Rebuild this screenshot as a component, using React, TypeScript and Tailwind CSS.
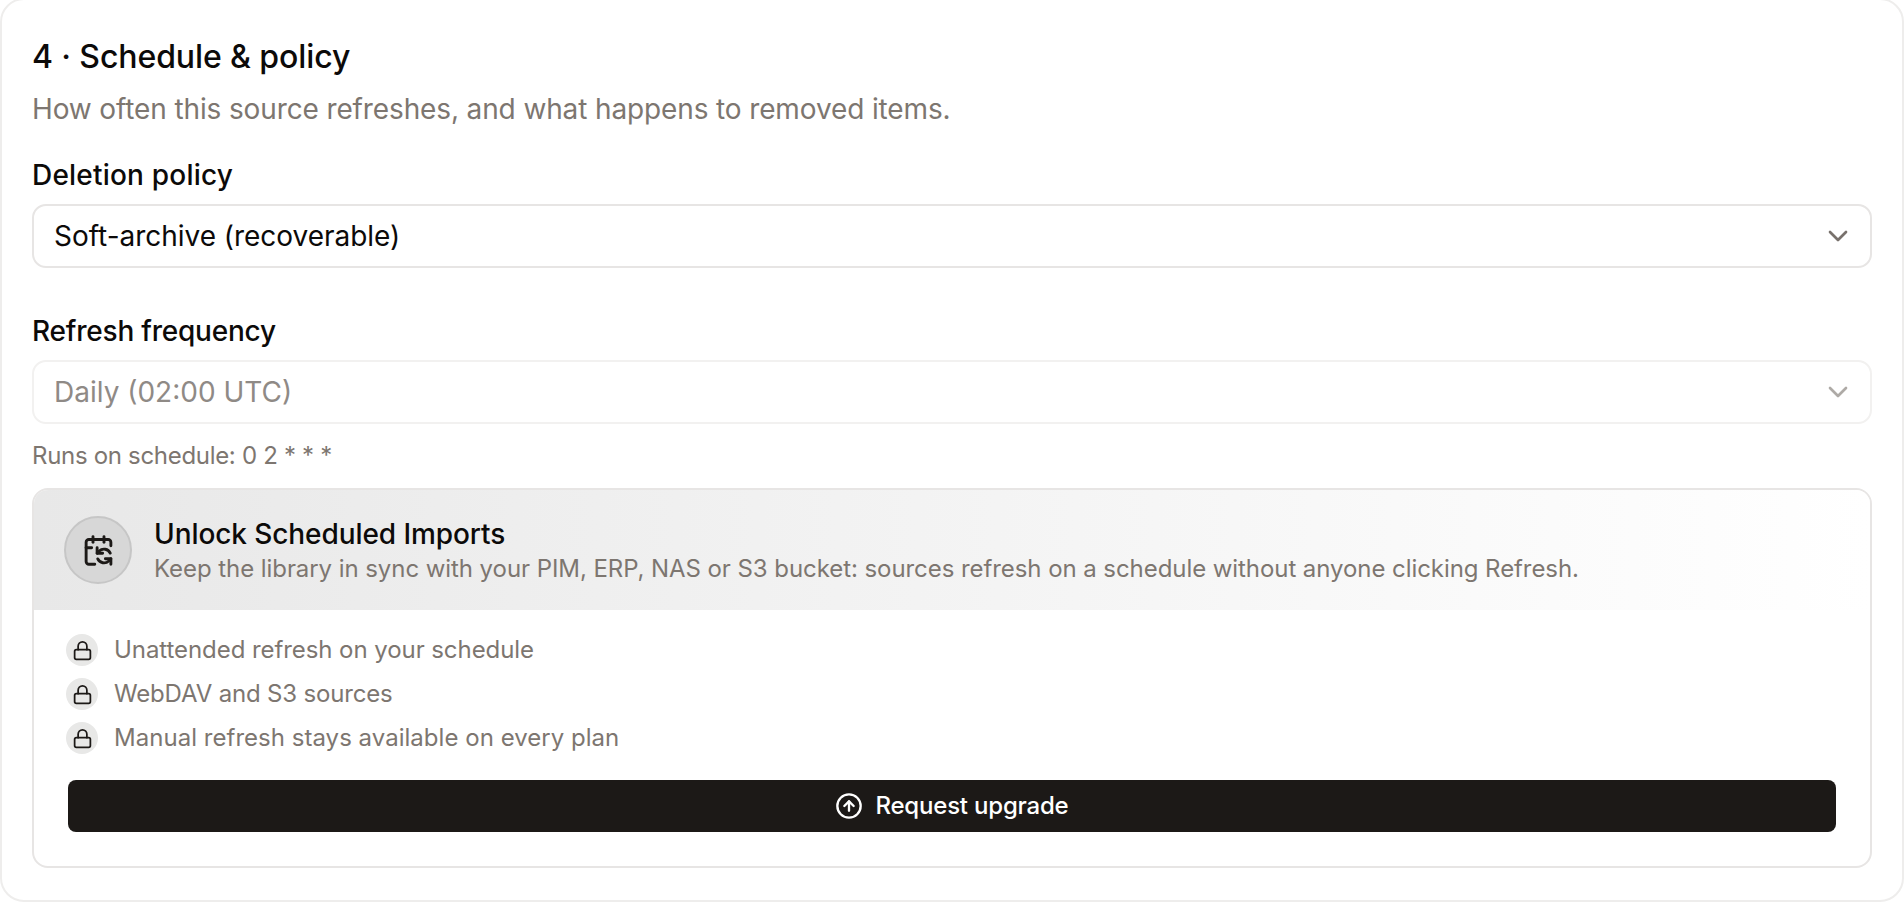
import { CalendarSync, ChevronDown, CircleArrowUp, Lock } from 'lucide-react';

const perks = [
  { text: 'Unattended refresh on your schedule', tracking: 'tracking-[-0.07px]' },
  { text: 'WebDAV and S3 sources', tracking: 'tracking-[-0.17px]' },
  { text: 'Manual refresh stays available on every plan', tracking: 'tracking-[0.03px]' },
];

function SelectBox({ value, tracking, disabled = false }: { value: string; tracking?: string; disabled?: boolean }) {
  return (
    <div
      className={`flex h-16 items-center justify-between rounded-[14px] border-2 pl-[20px] pr-4 ${
        disabled ? 'border-[#f2f1f0] text-[#8f8a86]' : 'border-[#e7e5e4] text-[#0c0a09]'
      }`}
    >
      <span className={`text-[28px] leading-none ${tracking ?? ''}`}>{value}</span>
      <ChevronDown className={`h-8 w-8 ${disabled ? 'text-[#aeaaa6]' : 'text-[#78716c]'}`} strokeWidth={2} />
    </div>
  );
}

export default function App() {
  return (
    <div className="h-[902px] w-full overflow-hidden bg-white font-['Inter',sans-serif]">
      <div className="-mt-[2px] h-[904px] rounded-[24px] border-2 border-[#eeedec] px-[30px] pt-[37px]">
        <h2 className="text-[32px] font-[450] leading-[40px] tracking-[-0.1px] text-[#0c0a09]">4 · Schedule &amp; policy</h2>
        <p className="mt-[12px] text-[28px] leading-[40px] tracking-[-0.127px] text-[#7d7670]">
          How often this source refreshes, and what happens to removed items.
        </p>

        <label className="mt-[26px] block text-[28px] font-[450] leading-[40px] tracking-[0.2px] text-[#0c0a09]">Deletion policy</label>
        <div className="mt-[9px]">
          <SelectBox value="Soft-archive (recoverable)" tracking="tracking-[-0.03px]" />
        </div>

        <label className="mt-[43px] block text-[28px] font-[450] leading-[40px] tracking-[-0.21px] text-[#0c0a09]">Refresh frequency</label>
        <div className="mt-[9px]">
          <SelectBox value="Daily (02:00 UTC)" disabled />
        </div>
        <p className="mt-[14px] text-[24px] leading-[36px] tracking-[-0.31px] text-[#7d7670]">Runs on schedule: 0 2 * * *</p>

        <div className="mt-[14px] h-[380px] overflow-hidden rounded-[16px] border-2 border-[#e7e5e4]">
          <div className="flex h-[120px] items-center gap-[22px] bg-gradient-to-r from-[#e8e8e8] to-white pl-[30px]">
            <div className="flex h-[68px] w-[68px] shrink-0 items-center justify-center rounded-full border-2 border-[#c6c6c6] bg-[#d7d7d7]">
              <CalendarSync className="h-[33px] w-[33px] text-[#1c1917]" strokeWidth={2.1} />
            </div>
            <div className="pt-[2px]">
              <div className="text-[28px] font-[450] leading-[36px] tracking-[-0.08px] text-[#0c0a09]">Unlock Scheduled Imports</div>
              <div className="text-[24px] leading-[34px] tracking-[-0.068px] text-[#7d7670]">
                Keep the library in sync with your PIM, ERP, NAS or S3 bucket: sources refresh on a schedule without anyone clicking Refresh.
              </div>
            </div>
          </div>

          <div className="px-[32px] pt-[24px]">
            <ul className="flex flex-col gap-[12.2px]">
              {perks.map((perk) => (
                <li key={perk.text} className="flex h-8 items-center gap-[16px]">
                  <span className="flex h-8 w-8 items-center justify-center rounded-full bg-[#e8e8e7]">
                    <Lock className="h-[21px] w-[21px] text-[#1c1917]" strokeWidth={2} />
                  </span>
                  <span className={`text-[24px] leading-none text-[#7d7670] ${perk.tracking}`}>{perk.text}</span>
                </li>
              ))}
            </ul>
            <button className="mx-[2px] mt-[25.5px] flex h-[52px] w-[calc(100%-4px)] items-center justify-center gap-[12px] rounded-[8px] bg-[#1c1917] text-[24px] font-[450] tracking-[-0.2px] text-white">
              <CircleArrowUp className="h-7 w-7" strokeWidth={2} />
              Request upgrade
            </button>
          </div>
        </div>
      </div>
    </div>
  );
}
